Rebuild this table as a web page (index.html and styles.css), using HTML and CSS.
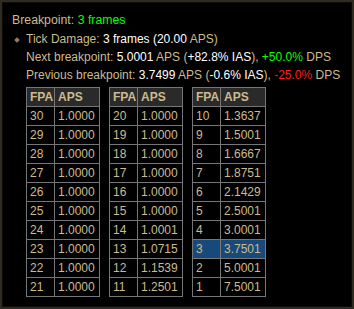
FILE: index.html
```html
<!DOCTYPE html>
<html>
<head>
<meta charset="utf-8">
<link rel="stylesheet" href="styles.css">
</head>
<body>
<div class="panel">
  <div class="title">Breakpoint: <span class="green">3 frames</span></div>
  <div class="detail">
    <div class="line"><span class="bullet"></span>Tick Damage: <span class="white">3 frames (20.00</span> APS)</div>
    <div class="line">Next breakpoint: <span class="white">5.0001</span> APS (<span class="white">+82.8% IAS</span>), <span class="green">+50.0%</span> DPS</div>
    <div class="line">Previous breakpoint: <span class="white">3.7499</span> APS (<span class="white">-0.6% IAS</span>), <span class="red">-25.0%</span> DPS</div>
    <div class="tables">
      <table class="bp">
        <tr><th>FPA</th><th>APS</th></tr>
        <tr><td>30</td><td>1.0000</td></tr>
        <tr><td>29</td><td>1.0000</td></tr>
        <tr><td>28</td><td>1.0000</td></tr>
        <tr><td>27</td><td>1.0000</td></tr>
        <tr><td>26</td><td>1.0000</td></tr>
        <tr><td>25</td><td>1.0000</td></tr>
        <tr><td>24</td><td>1.0000</td></tr>
        <tr><td>23</td><td>1.0000</td></tr>
        <tr><td>22</td><td>1.0000</td></tr>
        <tr><td>21</td><td>1.0000</td></tr>
      </table>
      <table class="bp">
        <tr><th>FPA</th><th>APS</th></tr>
        <tr><td>20</td><td>1.0000</td></tr>
        <tr><td>19</td><td>1.0000</td></tr>
        <tr><td>18</td><td>1.0000</td></tr>
        <tr><td>17</td><td>1.0000</td></tr>
        <tr><td>16</td><td>1.0000</td></tr>
        <tr><td>15</td><td>1.0000</td></tr>
        <tr><td>14</td><td>1.0001</td></tr>
        <tr><td>13</td><td>1.0715</td></tr>
        <tr><td>12</td><td>1.1539</td></tr>
        <tr><td>11</td><td>1.2501</td></tr>
      </table>
      <table class="bp">
        <tr><th>FPA</th><th>APS</th></tr>
        <tr><td>10</td><td>1.3637</td></tr>
        <tr><td>9</td><td>1.5001</td></tr>
        <tr><td>8</td><td>1.6667</td></tr>
        <tr><td>7</td><td>1.8751</td></tr>
        <tr><td>6</td><td>2.1429</td></tr>
        <tr><td>5</td><td>2.5001</td></tr>
        <tr><td>4</td><td>3.0001</td></tr>
        <tr class="current"><td>3</td><td>3.7501</td></tr>
        <tr><td>2</td><td>5.0001</td></tr>
        <tr><td>1</td><td>7.5001</td></tr>
      </table>
    </div>
  </div>
</div>
</body>
</html>
```

FILE: styles.css
```css
html, body {
  margin: 0;
  padding: 0;
  background: #000;
}
.panel {
  width: 354px;
  height: 309px;
  box-sizing: border-box;
  background: #000;
  border: 2px solid #2f2b20;
  box-shadow: inset 0 0 0 1px #0d0c09;
  padding: 9px 0 0 10px;
  font-family: "Liberation Sans", Arial, sans-serif;
  font-size: 12.3px;
  line-height: 18px;
  color: #cdbb90;
}
.title {
  margin-bottom: 1px;
}
.detail {
  padding-left: 14px;
  font-size: 12px;
}
.line {
  white-space: nowrap;
  position: relative;
}
.bullet {
  position: absolute;
  left: -11px;
  top: 8px;
  width: 4px;
  height: 4px;
  background: #8a7f6a;
  transform: rotate(45deg);
}
.white { color: #ffffff; }
.green { color: #00ff00; }
.red { color: #ff1a1a; }
.tables {
  display: flex;
  gap: 9px;
  margin-top: 3px;
}
table.bp {
  border-collapse: collapse;
  width: 74px;
  font-size: 12px;
}
table.bp th, table.bp td {
  border: 1px solid #767676;
  height: 18px;
  padding: 0 0 0 3px;
  text-align: left;
  line-height: 18px;
  box-sizing: border-box;
}
table.bp th {
  background: #2a2a2a;
  font-weight: bold;
}
table.bp th:first-child, table.bp td:first-child {
  width: 28px;
}
table.bp tr.current td {
  background: #17497a;
}
```
